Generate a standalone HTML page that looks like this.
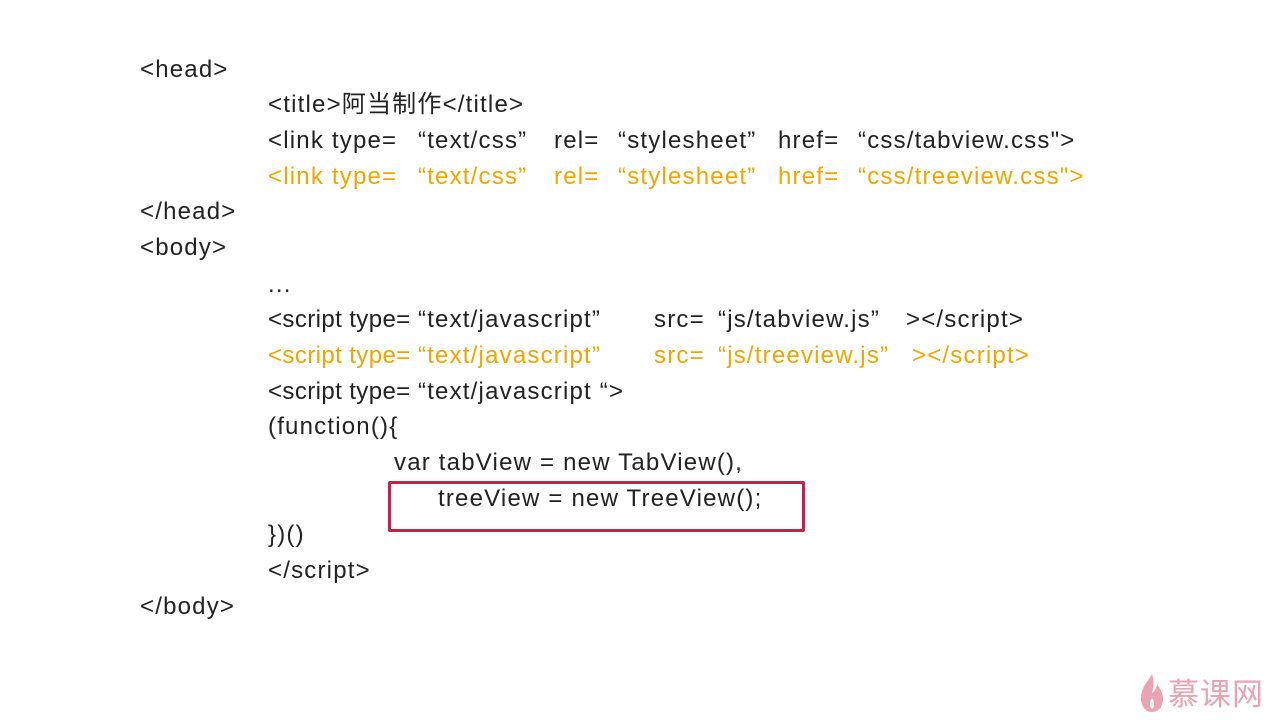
<!DOCTYPE html>
<html><head><meta charset="utf-8"><style>
html,body{margin:0;padding:0;background:#fff;width:1280px;height:720px;overflow:hidden;position:relative}
.t{position:absolute;white-space:pre;font-family:"Liberation Sans","Noto Sans CJK SC",sans-serif;font-size:24px;color:#222;line-height:30px;letter-spacing:1.2px}
.s{letter-spacing:0.4px}
.o{color:#f0a500}
.box{position:absolute;left:388px;top:481px;width:411px;height:45px;border:3px solid #c3224a;border-radius:2px}
.logo{position:absolute;left:1168px;top:674px;font-family:"Noto Sans CJK SC",sans-serif;font-size:31px;color:#eaa3b3;line-height:36px;letter-spacing:1px}
</style></head><body>
<div class="t" style="left:140px;top:55px">&lt;head&gt;</div>
<div class="t" style="left:268px;top:90px">&lt;title&gt;阿当制作&lt;/title&gt;</div>

<div class="t" style="left:268px;top:126px">&lt;link type=</div>
<div class="t" style="left:418px;top:126px">“text/css”</div>
<div class="t" style="left:554px;top:126px">rel=</div>
<div class="t" style="left:618px;top:126px">“stylesheet”</div>
<div class="t" style="left:778px;top:126px">href=</div>
<div class="t" style="left:858px;top:126px">“css/tabview.css"&gt;</div>

<div class="t o" style="left:268px;top:162px">&lt;link type=</div>
<div class="t o" style="left:418px;top:162px">“text/css”</div>
<div class="t o" style="left:554px;top:162px">rel=</div>
<div class="t o" style="left:618px;top:162px">“stylesheet”</div>
<div class="t o" style="left:778px;top:162px">href=</div>
<div class="t o" style="left:858px;top:162px">“css/treeview.css"&gt;</div>

<div class="t" style="left:140px;top:197px">&lt;/head&gt;</div>
<div class="t" style="left:140px;top:233px">&lt;body&gt;</div>
<div class="t" style="left:268px;top:270px">...</div>

<div class="t s" style="left:268px;top:305px">&lt;script type=</div>
<div class="t" style="left:418px;top:305px">“text/javascript”</div>
<div class="t" style="left:654px;top:305px">src=</div>
<div class="t" style="left:718px;top:305px">“js/tabview.js”</div>
<div class="t" style="left:906px;top:305px">&gt;&lt;/script&gt;</div>

<div class="t o s" style="left:268px;top:341px">&lt;script type=</div>
<div class="t o" style="left:418px;top:341px">“text/javascript”</div>
<div class="t o" style="left:654px;top:341px">src=</div>
<div class="t o" style="left:718px;top:341px">“js/treeview.js”</div>
<div class="t o" style="left:912px;top:341px">&gt;&lt;/script&gt;</div>

<div class="t s" style="left:268px;top:377px">&lt;script type=</div>
<div class="t" style="left:418px;top:377px">“text/javascript&nbsp;“&gt;</div>
<div class="t" style="left:268px;top:412px">(function(){</div>
<div class="t" style="left:394px;top:448px">var tabView = new TabView(),</div>
<div class="t" style="left:438px;top:484px">treeView = new TreeView();</div>
<div class="box"></div>
<div class="t" style="left:268px;top:520px">})()</div>
<div class="t" style="left:268px;top:556px">&lt;/script&gt;</div>
<div class="t" style="left:140px;top:592px">&lt;/body&gt;</div>

<svg style="position:absolute;left:1138px;top:672px" width="28" height="42" viewBox="0 0 28 42">
<path d="M14 2 C10 10 2 16 3 28 C4 36 9 40 14 40 C20 40 25 35 25 27 C25 20 21 16 19 12 C18 18 16 20 14 21 C16 14 16 8 14 2Z" fill="#eaa3b3"/>
<path d="M14 26 C11 30 11 35 14 37 C17 35 17 30 14 26Z" fill="#fff"/>
</svg>
<div class="logo">慕课网</div>
</body></html>
